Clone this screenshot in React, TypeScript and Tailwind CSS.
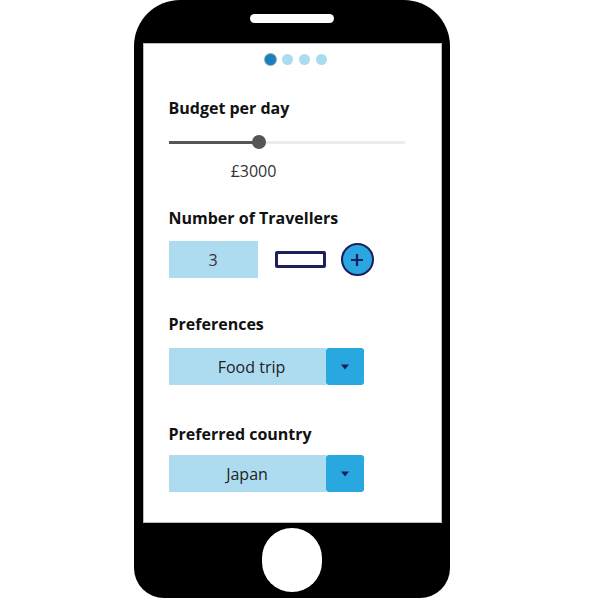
const font = { fontFamily: '"Open Sans", "Liberation Sans", sans-serif' };

function Dropdown({ value, shift = 0 }: { value: string; shift?: number }) {
  return (
    <div className="flex h-[37px] w-[195px]">
      <div
        className="flex flex-1 items-center justify-center bg-[#addcf0] text-[16px] text-[#222]"
        style={{ paddingLeft: shift }}
      >
        {value}
      </div>
      <div className="flex w-[38px] items-center justify-center rounded-[3px] bg-[#29a7df]">
        <svg width="10" height="6" viewBox="0 0 10 6">
          <path d="M1 0.5 L9 0.5 L5 5.5 Z" fill="#1b1f5c" />
        </svg>
      </div>
    </div>
  );
}

export default function App() {
  return (
    <div className="h-[600px] w-[600px] bg-white pl-[134px]" style={font}>
      <div className="flex h-[598px] w-[316px] flex-col items-center rounded-t-[46px] rounded-b-[30px] bg-black">
        <div className="mt-[14px] h-[9px] w-[84px] rounded-full bg-white" />
        <div className="mt-[20px] flex h-[480px] w-[299px] flex-col border border-[#bbb] bg-white pl-[25px]">
          <div className="mt-[10px] flex items-center gap-[6px] pl-[96px]">
            <div className="h-[11px] w-[11px] rounded-full bg-[#1a7fbf] ring-1 ring-[#8aa]" />
            <div className="h-[11px] w-[11px] rounded-full bg-[#a9dbf1]" />
            <div className="h-[11px] w-[11px] rounded-full bg-[#a9dbf1]" />
            <div className="h-[11px] w-[11px] rounded-full bg-[#a9dbf1]" />
          </div>

          <div className="mt-[33px] text-[16px] font-bold leading-[20px] text-[#111]">Budget per day</div>
          <div className="relative mt-[17px] flex h-[14px] w-[236px] items-center">
            <div className="h-[3px] w-[89px] bg-[#555]" />
            <div className="h-[3px] flex-1 bg-[#ececec]" />
            <div className="absolute left-[83px] top-0 h-[14px] w-[14px] rounded-full bg-[#555]" />
          </div>
          <div className="mt-[13px] w-[170px] text-center text-[16px] leading-[18px] text-[#333]">£3000</div>

          <div className="mt-[28px] text-[16px] font-bold leading-[20px] text-[#111]">Number of Travellers</div>
          <div className="mt-[13px] flex items-center">
            <div className="flex h-[37px] w-[89px] items-center justify-center bg-[#addcf0] text-[16px] text-[#333]">3</div>
            <div className="ml-[17px] h-[17px] w-[51px] rounded-[2px] border-[3px] border-[#1b1f5c] bg-white" />
            <div className="ml-[15px] flex h-[33px] w-[33px] items-center justify-center rounded-full border-[2.5px] border-[#1b1f5c] bg-[#2aa6e0]">
              <svg width="14" height="14" viewBox="0 0 14 14">
                <path d="M7 1 V13 M1 7 H13" stroke="#1b1f5c" strokeWidth="2.2" />
              </svg>
            </div>
          </div>

          <div className="mt-[36px] text-[16px] font-bold leading-[20px] text-[#111]">Preferences</div>
          <div className="mt-[14px]">
            <Dropdown value="Food trip" shift={9} />
          </div>

          <div className="mt-[39px] text-[16px] font-bold leading-[20px] text-[#111]">Preferred country</div>
          <div className="mt-[11px]">
            <Dropdown value="Japan" />
          </div>
        </div>
        <div className="mt-[5px] h-[64px] w-[60px] rounded-full bg-white" />
      </div>
    </div>
  );
}
